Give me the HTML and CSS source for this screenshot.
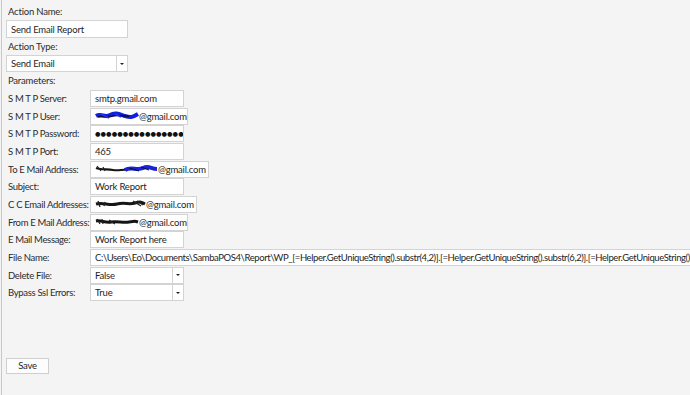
FILE: index.html
```html
<!DOCTYPE html>
<html>
<head>
<meta charset="utf-8">
<link rel="stylesheet" href="styles.css">
</head>
<body>
<div class="page">
  <div class="top">
    <div class="lbl">Action Name:</div>
    <div class="box name">Send Email Report</div>
    <div class="lbl">Action Type:</div>
    <div class="box combo type"><span class="val">Send Email</span><span class="arrow"><i></i></span></div>
    <div class="lbl">Parameters:</div>
  </div>
  <div class="grid">
    <div class="plbl">S M T P Server:</div>
    <div class="box w93">smtp.gmail.com</div>

    <div class="plbl">S M T P User:</div>
    <div class="box w97"><svg class="scr" width="44" height="10" viewBox="0 0 44 10"><path d="M1 5 C6 2 10 7 15 4 S24 3 30 5 S38 6 43 3" stroke="#1020e0" stroke-width="4" fill="none"/><path d="M3 6 C8 4 12 7 18 5 S26 6 34 5" stroke="#101040" stroke-width="1.8" fill="none"/><path d="M6 3 L14 7 M20 3 L26 6" stroke="#2030ff" stroke-width="1.4"/></svg>@gmail.com</div>

    <div class="plbl">S M T P Password:</div>
    <div class="box w93 pw">●●●●●●●●●●●●●●●●</div>

    <div class="plbl">S M T P Port:</div>
    <div class="box w93">465</div>

    <div class="plbl">To E Mail Address:</div>
    <div class="box w118"><svg class="scr" width="63" height="10" viewBox="0 0 63 10"><path d="M1 4 C6 6 12 5 18 6 S28 5 33 6" stroke="#151515" stroke-width="2.2" fill="none"/><path d="M2 2 L6 7 M8 3 L10 7" stroke="#222" stroke-width="1.2"/><path d="M30 6 C36 2 42 7 48 4 S56 5 62 5" stroke="#1a24d8" stroke-width="4" fill="none"/><path d="M34 4 L44 7 M46 3 L54 6" stroke="#101050" stroke-width="1.2"/></svg>@gmail.com</div>

    <div class="plbl">Subject:</div>
    <div class="box w93">Work Report</div>

    <div class="plbl">C C Email Addresses:</div>
    <div class="box w106"><svg class="scr" width="51" height="10" viewBox="0 0 51 10"><path d="M1 5 C8 3 14 7 22 5 S34 6 40 4 S46 3 50 5" stroke="#161616" stroke-width="3" fill="none"/><path d="M3 2 L5 8 M10 3 L9 7 M38 2 L46 7 M42 2 L48 6" stroke="#222" stroke-width="1.3"/></svg>@gmail.com</div>

    <div class="plbl">From E Mail Address:</div>
    <div class="box w97"><svg class="scr" width="44" height="10" viewBox="0 0 44 10"><path d="M1 4 C6 3 10 6 16 5 S28 6 34 5 S40 4 43 5" stroke="#141414" stroke-width="3" fill="none"/><path d="M2 2 L5 7 M7 2 L8 7 M14 3 L20 7" stroke="#222" stroke-width="1.2"/></svg>@gmail.com</div>

    <div class="plbl">E Mail Message:</div>
    <div class="box w93">Work Report here</div>

    <div class="plbl">File Name:</div>
    <div class="box wide">C:\Users\Eo\Documents\SambaPOS4\Report\WP_[=Helper.GetUniqueString().substr(4,2)].[=Helper.GetUniqueString().substr(6,2)].[=Helper.GetUniqueString().substr(0,4)]_[=Helper.GetUniqueString()].pdf</div>

    <div class="plbl">Delete File:</div>
    <div class="box combo w93"><span class="val">False</span><span class="arrow"><i></i></span></div>

    <div class="plbl">Bypass Ssl Errors:</div>
    <div class="box combo w93"><span class="val">True</span><span class="arrow"><i></i></span></div>
  </div>
  <div class="spacer"></div>
  <div class="btnrow"><div class="btn">Save</div></div>
</div>
</body>
</html>
```
FILE: styles.css
```css
html, body {
  margin: 0;
  padding: 0;
  width: 690px;
  height: 395px;
  overflow: hidden;
  background: #f4f4f4;
}
.page {
  box-sizing: border-box;
  height: 395px;
  margin-left: 1px;
  border-left: 1px solid #c9c9c9;
  padding-left: 4px;
  display: flex;
  flex-direction: column;
  font-family: "Lato", "Noto Sans", sans-serif;
  font-size: 9.5px;
  letter-spacing: -0.2px;
  color: #2b2b2b;
}
.top {
  display: flex;
  flex-direction: column;
  align-items: flex-start;
  padding-top: 4px;
}
.lbl {
  height: 16px;
  line-height: 16px;
  padding-left: 2px;
}
.box {
  box-sizing: border-box;
  height: 17px;
  line-height: 15px;
  background: #fff;
  border: 1px solid #d3d3d3;
  padding: 0 3px 0 4px;
  white-space: nowrap;
  overflow: hidden;
  display: flex;
  align-items: center;
  color: #1e1e1e;
}
.name { width: 122px; height: 18px; }
.type { width: 122px; }
.combo { padding-right: 0; }
.combo .val { flex: 1; }
.arrow {
  width: 10px;
  height: 100%;
  border-left: 1px solid #d3d3d3;
  display: flex;
  align-items: center;
  justify-content: center;
}
.arrow i {
  width: 0;
  height: 0;
  border-left: 2px solid transparent;
  border-right: 2px solid transparent;
  border-top: 2px solid #222;
}
.top .lbl + .box { margin-bottom: 1px; }
.grid {
  display: grid;
  grid-template-columns: 84px 1fr;
  grid-auto-rows: 17.67px;
  align-items: start;
  margin-top: 1px;
}
.plbl {
  padding-left: 2px;
  line-height: 17px;
  white-space: nowrap;
  letter-spacing: -0.32px;
}
.w93 { width: 94px; }
.w97 { width: 98px; }
.w106 { width: 107px; }
.w118 { width: 119px; }
.wide { width: 760px; letter-spacing: -0.41px; }
.pw { font-family: "DejaVu Sans", sans-serif; font-size: 6.3px; letter-spacing: 0.05px; color: #111; }
.scr { flex: none; display: block; }
.spacer { flex: 1; }
.btnrow { padding-bottom: 21px; }
.btn {
  box-sizing: border-box;
  width: 43px;
  height: 16px;
  line-height: 14px;
  text-align: center;
  background: #fdfdfd;
  border: 1px solid #cfcfcf;
  color: #222;
}
```
